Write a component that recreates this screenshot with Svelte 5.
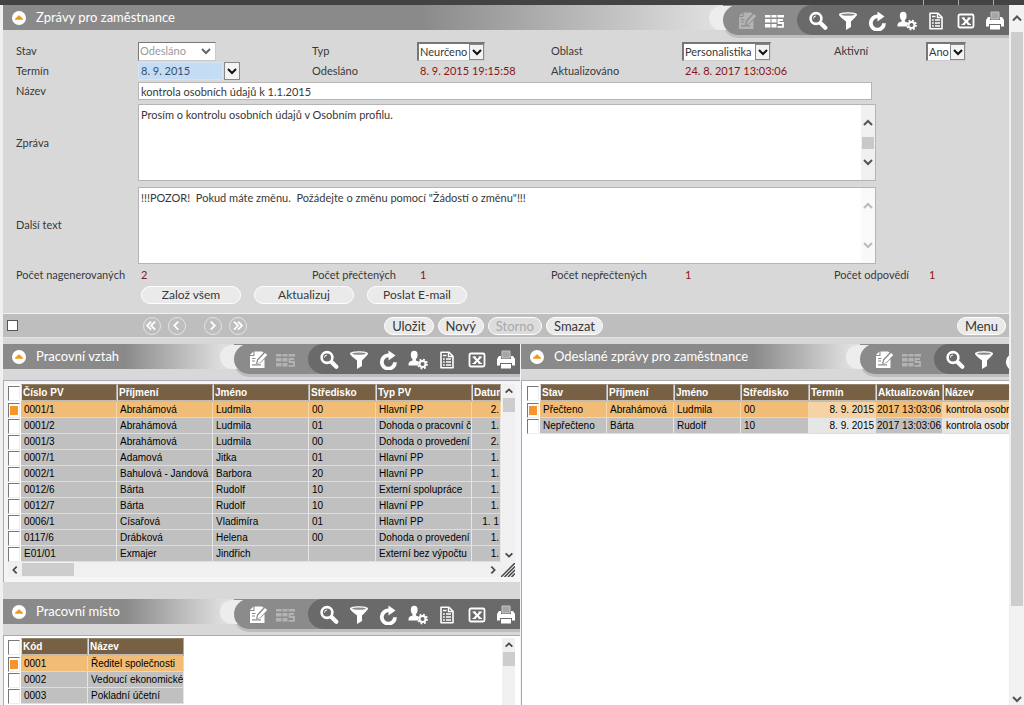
<script>
  const form = {
    top: [
      { label: 'Stav', options: ['Odesláno'], width: 78, disabled: true },
      { label: 'Typ', options: ['Neurčeno'], width: 68 },
      { label: 'Oblast', options: ['Personalistika'], width: 89 },
      { label: 'Aktivní', options: ['Ano'], width: 40 }
    ],
    counts: [
      { label: 'Počet nagenerovaných', value: 2 },
      { label: 'Počet přečtených', value: 1 },
      { label: 'Počet nepřečtených', value: 1 },
      { label: 'Počet odpovědí', value: 1 }
    ]
  };

  const relations = {
    columns: [
      { name: 'Číslo PV', width: 96 },
      { name: 'Příjmení', width: 96 },
      { name: 'Jméno', width: 96 },
      { name: 'Středisko', width: 67 },
      { name: 'Typ PV', width: 96 },
      { name: 'Datum', width: 29, right: true }
    ],
    rows: [
      ['0001/1', 'Abrahámová', 'Ludmila', '00', 'Hlavní PP', '2.'],
      ['0001/2', 'Abrahámová', 'Ludmila', '01', 'Dohoda o pracovní č', '1.'],
      ['0001/3', 'Abrahámová', 'Ludmila', '00', 'Dohoda o provedení', '2.'],
      ['0007/1', 'Adamová', 'Jitka', '01', 'Hlavní PP', '1.'],
      ['0002/1', 'Bahulová - Jandová', 'Barbora', '20', 'Hlavní PP', '1.'],
      ['0012/6', 'Bárta', 'Rudolf', '10', 'Externí spolupráce', '1.'],
      ['0012/7', 'Bárta', 'Rudolf', '10', 'Hlavní PP', '1.'],
      ['0006/1', 'Císařová', 'Vladimíra', '01', 'Hlavní PP', '1. 1'],
      ['0117/6', 'Drábková', 'Helena', '00', 'Dohoda o provedení', '1.'],
      ['E01/01', 'Exmajer', 'Jindřich', '', 'Externí bez výpočtu', '1.']
    ]
  };

  const places = {
    columns: [
      { name: 'Kód', width: 67 },
      { name: 'Název', width: 96 }
    ],
    rows: [
      ['0001', 'Ředitel společnosti'],
      ['0002', 'Vedoucí ekonomické'],
      ['0003', 'Pokladní účetní']
    ]
  };

  const sent = {
    columns: [
      { name: 'Stav', width: 67 },
      { name: 'Příjmení', width: 67 },
      { name: 'Jméno', width: 67 },
      { name: 'Středisko', width: 68 },
      { name: 'Termín', width: 67, right: true, light: true },
      { name: 'Aktualizován', width: 67, right: true },
      { name: 'Název', width: 96, light: true }
    ],
    rows: [
      ['Přečteno', 'Abrahámová', 'Ludmila', '00', '8. 9. 2015', '2017 13:03:06', 'kontrola osobn'],
      ['Nepřečteno', 'Bárta', 'Rudolf', '10', '8. 9. 2015', '2017 13:03:06', 'kontrola osobn']
    ]
  };

  const tools = [
    ['search', 'Hledat'],
    ['filter', 'Filtr'],
    ['refresh', 'Obnovit'],
    ['user', 'Nastavení uživatele'],
    ['doc', 'Sestava'],
    ['excel', 'Export'],
    ['print', 'Tisk']
  ];
</script>

{#snippet icon(name)}
  <svg class="icon" viewBox="0 0 20 20" aria-hidden="true">
    {#if name === 'edit'}
      <path fill="currentColor" d="M6.500 1.500H14l1.500 1L9 9.500l-1 4.500 4.500-1L16.500 9v9H2V6h4.500z" />
      <path fill="currentColor" d="M2 5 5.400 1.500V5zM17 3l2.200 1.900-7 7.500-2.700.9.500-2.900z" />
      <path class="cut" d="M4 8.500h3.500M4 11h3M4 14.800h9" stroke-width="1.200" fill="none" />
    {:else if name === 'table'}
      <path fill="currentColor" d="M1 4h5.500v2.500H1zM7.500 4h5v2.500h-5zM13.500 4H20v2.500h-6.500zM1 8h5.500v3.500H1zM7.500 8h5v3.500h-5zM1 13h5.500v3.500H1zM7.500 13h5v3.500h-5z" />
      <path d="M19 9h-4.500v3h4.500v3.800h-5.500" fill="none" stroke="currentColor" stroke-width="1.800" />
    {:else if name === 'search'}
      <circle cx="8" cy="7.500" r="5.400" fill="none" stroke="currentColor" stroke-width="2.600" />
      <path d="m13 12.500 4.300 4.300" stroke="currentColor" stroke-width="4.200" stroke-linecap="round" />
      <path d="M5.500 7.500a2.500 2.500 0 0 1 2.500-2.500" fill="none" stroke="currentColor" />
    {:else if name === 'filter'}
      <path fill="currentColor" d="M1 3.600C1 .5 19 .5 19 3.600c0 1-1 1.800-2 2.800l-4 4.200V16l-5 3v-8.400L3 6.400c-1-1-2-1.800-2-2.800z" />
      <ellipse class="hole" cx="10" cy="3.600" rx="6.800" ry="1.100" />
    {:else if name === 'refresh'}
      <path d="M17 12.200A6.600 6.600 0 1 1 11 5.500" fill="none" stroke="currentColor" stroke-width="3.800" />
      <path fill="currentColor" d="M10.500.5 17.500 5.500l-7 5z" />
    {:else if name === 'user'}
      <ellipse cx="6.200" cy="5" rx="3.400" ry="4.200" fill="currentColor" />
      <path fill="currentColor" d="M4.500 8h3.400v2.500l3 1.300-1 3.700H.5c0-3 .5-3.800 4-5z" />
      <circle cx="14.500" cy="14" r="3" fill="none" stroke="currentColor" stroke-width="2" />
      <circle cx="14.500" cy="14" r="4.500" fill="none" stroke="currentColor" stroke-width="1.800" stroke-dasharray="1.800 1.734" />
    {:else if name === 'doc'}
      <path d="M4 2.200h8l4 4v11.600H4z" fill="none" stroke="currentColor" stroke-width="1.600" stroke-linejoin="round" />
      <path d="M11.500 2v4.500H16M6 5.500h3.500M6 9h1.800M9 9h5M6 12h1.800M9 12h5M6 15h1.800M9 15h5" fill="none" stroke="currentColor" stroke-width="1.400" />
    {:else if name === 'excel'}
      <rect x="2.500" y="3.500" width="15" height="13" rx="1.500" fill="none" stroke="currentColor" stroke-width="1.800" />
      <path d="M5.500 7h3.500M11.500 7H15M5.500 13.500h3.500M11.500 13.500H15" stroke="currentColor" stroke-width="1.200" />
      <path d="m6.800 7 6.500 6.500M13.700 7l-6.500 6.500" stroke="currentColor" stroke-width="2" />
    {:else if name === 'print'}
      <path d="M6 1h8v7H6z" fill="#a5a5a5" stroke="#c4c4c4" />
      <path fill="currentColor" d="M3 6h2v3h10V6h2l2 3v6.500h-3V13H4v2.500H1V9z" />
      <path fill="currentColor" d="M5 14h10v4.500H5z" />
      <path class="cut" d="M4 13.500h12" stroke-width="1" />
    {/if}
  </svg>
{/snippet}

{#snippet chevron(dir)}
  <svg class="chevron {dir}" viewBox="0 0 12 12" aria-hidden="true">
    <path d="m2 4 4 4 4-4" fill="none" stroke="currentColor" stroke-width="2" />
  </svg>
{/snippet}

{#snippet header(title)}
  <header class="head">
    <button class="collapse" aria-label="Sbalit"><svg viewBox="0 0 14 14" aria-hidden="true"><path d="m7 4.200 4 3.600v1H3v-1z" fill="#f0981c" /></svg></button>
    <h2>{title}</h2>
    <div class="fade"></div>
    <div class="tools">
      <button aria-label="Upravit" class="tool edit">{@render icon('edit')}</button>
      <button aria-label="Tabulka" class="tool grid">{@render icon('table')}</button>
      <div class="dark">
        {#each tools as [name, label]}
          <button class="tool" aria-label={label}>{@render icon(name)}</button>
        {/each}
      </div>
    </div>
  </header>
{/snippet}

{#snippet grid(data)}
  <table style:width="{data.columns.reduce((s, c) => s + c.width, 13)}px">
    <colgroup>
      <col style:width="13px" />
      {#each data.columns as c}<col style:width="{c.width}px" />{/each}
    </colgroup>
    <thead>
      <tr>
        <th class="pick"><input type="checkbox" aria-label="Vybrat vše" /></th>
        {#each data.columns as c}<th>{c.name}</th>{/each}
      </tr>
    </thead>
    <tbody>
      {#each data.rows as row, i}
        <tr class:selected={i === 0}>
          <td class="pick"><input type="checkbox" checked={i === 0} aria-label="Vybrat {row[0]}" /></td>
          {#each row as cell, j}
            <td class:right={data.columns[j].right} class:light={data.columns[j].light}><div>{cell}</div></td>
          {/each}
        </tr>
      {/each}
    </tbody>
  </table>
{/snippet}

<div class="page">
  <div class="strip"><i></i><i></i><i></i></div>
  <div class="body">
    <main>
      <section class="detail">
        {@render header('Zprávy pro zaměstnance')}
        <form>
          <div class="fields">
            {#each form.top as f, i}
              <label for="top{i}">{f.label}</label>
              <span class="select" class:off={f.disabled} style:width="{f.width}px">
                <select id="top{i}" disabled={f.disabled}>
                  {#each f.options as o}<option>{o}</option>{/each}
                </select>
                <span class="drop">{@render chevron('down')}</span>
              </span>
            {/each}
            <label for="term">Termín</label>
            <span class="date">
              <input id="term" value="8. 9. 2015" />
              <button type="button" class="drop" aria-label="Kalendář">{@render chevron('down')}</button>
            </span>
            <span>Odesláno</span><output>8. 9. 2015 19:15:58</output>
            <span>Aktualizováno</span><output class="span">24. 8. 2017 13:03:06</output>
            <label for="name">Název</label>
            <div class="wide"><input id="name" class="name" value="kontrola osobních údajů k 1.1.2015" /></div>
            <label for="msg" class="tall">Zpráva</label>
            <div class="wide area">
              <textarea id="msg">Prosím o kontrolu osobních údajů v Osobním profilu.</textarea>
              <div class="scroll">{@render chevron('up')}<b></b>{@render chevron('down')}</div>
            </div>
            <label for="more" class="tall">Další text</label>
            <div class="wide area">
              <textarea id="more">!!!POZOR!  Pokud máte změnu.  Požádejte o změnu pomocí "Žádostí o změnu"!!!</textarea>
              <div class="scroll idle">{@render chevron('up')}{@render chevron('down')}</div>
            </div>
            {#each form.counts as c}
              <span>{c.label}</span><output>{c.value}</output>
            {/each}
            <div class="actions">
              <button type="button">Založ všem</button>
              <button type="button">Aktualizuj</button>
              <button type="button">Poslat E-mail</button>
            </div>
          </div>
        </form>
        <div class="bar">
          <div class="mark"><input type="checkbox" aria-label="Označit záznam" /></div>
          <nav aria-label="Záznamy">
            <button aria-label="První"><svg viewBox="0 0 18 18"><path d="m8 4-4.500 4.500L8 13M12.500 4 8 8.500l4.500 4.500" /></svg></button>
            <button aria-label="Předchozí"><svg viewBox="0 0 18 18"><path d="M10.500 4 6 8.500l4.500 4.500" /></svg></button>
            <button aria-label="Další" class="next"><svg viewBox="0 0 18 18"><path d="m6.500 4 4.500 4.500L6.500 13" /></svg></button>
            <button aria-label="Poslední"><svg viewBox="0 0 18 18"><path d="M4.500 4 9 8.500 4.500 13M9 4l4.500 4.500L9 13" /></svg></button>
          </nav>
          <div class="commands">
            <button>Uložit</button>
            <button>Nový</button>
            <button disabled>Storno</button>
            <button>Smazat</button>
          </div>
          <button class="menu">Menu</button>
        </div>
      </section>

      <div class="lower">
        <div class="left">
          <section class="panel">
            {@render header('Pracovní vztah')}
            <div class="box">
              <div class="view">
                <div class="clip">{@render grid(relations)}</div>
                <div class="vbar">{@render chevron('up')}<b></b><span></span>{@render chevron('down')}</div>
              </div>
              <div class="hbar">
                {@render chevron('west')}<b></b><span></span>{@render chevron('east')}
                <svg class="grip" viewBox="0 0 14 14" aria-hidden="true"><path d="M0 14 14 0M3.500 14 14 3.500M7 14l7-7M10.500 14l3.500-3.500" stroke="#444" stroke-width="1.500" /></svg>
              </div>
            </div>
          </section>
          <section class="panel last">
            {@render header('Pracovní místo')}
            <div class="box blank">
              <div class="view">
                <div class="clip">{@render grid(places)}</div>
                <div class="vbar">{@render chevron('up')}<b></b><span></span></div>
              </div>
            </div>
          </section>
        </div>
        <section class="panel sent">
          {@render header('Odeslané zprávy pro zaměstnance')}
          <div class="box blank">
            <div class="clip">{@render grid(sent)}</div>
          </div>
        </section>
      </div>
    </main>
    <div class="pagebar">{@render chevron('up')}<b></b><span></span>{@render chevron('down')}</div>
  </div>
</div>

<style>
  :global(body) { margin: 0; background: #f0f0f0; }
  .page, .page * { box-sizing: border-box; }
  .page {
    display: flex; flex-direction: column; height: 100vh; overflow: hidden;
    font: 11px/16px Lato, "Open Sans", sans-serif; color: #383838;
  }
  button, input, select, textarea { font: inherit; color: inherit; margin: 0; padding: 0; border: 0; background: none; border-radius: 0; appearance: none; }
  .strip { flex: none; height: 5px; background: #434343; display: flex; justify-content: flex-end; gap: 34px; padding-right: 30px; }
  .strip i { width: 1px; background: #aaa; }
  .body { flex: 1; min-height: 0; display: flex; }
  main { flex: 1; min-width: 0; margin-left: 3px; background: #d8d8d8; display: flex; flex-direction: column; }

  .head { flex: none; display: flex; height: 25px; align-items: flex-start; background: #8a8a8a; }
  .collapse { flex: none; width: 14px; height: 14px; margin: 6px 0 0 9px; border-radius: 50%; background: #fff; }
  .collapse svg { display: block; }
  h2 { margin: 0 0 0 10px; font-size: 13px; line-height: 25px; font-weight: 400; color: #fff; white-space: nowrap; }
  .fade { flex: 1; min-width: 0; height: 25px; background: linear-gradient(90deg, #8a8a8a 5%, #dedede 90%); }
  .tools {
    flex: none; display: flex; align-items: center; width: 286px; height: 30px;
    border-radius: 15px 0 0 15px; background: #8b8b8b; padding-left: 14px;
    box-shadow: -17px -2px 0 -3px #ededed, 0 3px 0 #bdbdbd;
  }
  .detail .fade { background: linear-gradient(90deg, #8a8a8a 45%, #e2e2e2); }
  .tool { width: 20px; height: 20px; margin-top: 2px; color: #fff; }
  .icon { display: block; width: 20px; height: 20px; }
  .grid { margin-left: 7px; color: #b3b3b3; }
  .detail .edit { color: #b3b3b3; }
  .detail .grid { color: #fff; }
  .cut { stroke: #8b8b8b; }
  .hole { fill: #8b8b8b; }
  .dark {
    margin-left: auto; width: 212px; height: 30px; display: flex; align-items: center; justify-content: space-between;
    padding: 0 4px 0 11px; border-radius: 15px 0 0 15px; background: #6a6a6a;
  }
  .dark .cut { stroke: #6a6a6a; }

  .fields {
    display: grid; padding: 11px 0 9px 13px; align-items: center;
    grid-template-columns: 122fr 174fr 105fr 134fr 131fr 152fr 92fr 83fr;
    grid-template-rows: 20px 20px 20px 80px 83px 22px 18px;
  }
  .fields > * { min-width: 0; white-space: nowrap; }
  .tall { padding-top: 4px; }
  output { color: #8b1414; padding-left: 3px; }
  .span { grid-column: span 3; }
  .select { display: flex; height: 19px; background: #fff; border: 1px solid #ccc; border-top: 2px solid #777; border-left: 2px solid #777; }
  .select select { flex: 1; min-width: 0; padding-left: 1px; opacity: 1; text-overflow: clip; }
  .select.off { border-top-width: 1px; border-left-width: 1px; color: #999; }
  .select.off .drop { border-color: transparent; background: none; color: #666; width: 18px; }
  .drop { flex: none; display: flex; align-items: center; justify-content: center; width: 15px; background: #f3f3f3; border: 1px solid #888; color: #111; }
  .chevron { display: block; width: 12px; height: 12px; flex: none; }
  .up { transform: rotate(180deg); }
  .west { transform: rotate(90deg); }
  .east { transform: rotate(-90deg); }
  .date { display: flex; height: 18px; }
  .date input { width: 85px; background: #c5dcf5; border: 1px solid #d5e3f2; padding-left: 2px; color: #34506f; }
  .date .drop { width: 16px; margin-left: 1px; }
  .wide { grid-column: 2 / -1; }
  .name { display: block; width: 84.3%; height: 18px; padding-left: 2px; background: #fff; border: 1px solid #b5b5b5; }
  .area { display: flex; width: 84.7%; height: 77px; align-self: end; background: #fff; border: 1px solid #b5b5b5; }
  textarea { flex: 1; min-width: 0; resize: none; padding: 2px; overflow: hidden; outline: 0; }
  .scroll { width: 14px; background: #f0f0f0; display: flex; flex-direction: column; justify-content: space-between; align-items: center; padding: 12px 0; color: #555; }
  .scroll b { width: 12px; height: 12px; background: #c9c9c9; }
  .idle { background: #f9f9f9; color: #bbb; }
  .actions { grid-column: 2 / -1; display: flex; gap: 13px; padding-left: 3px; }
  .actions button, .commands button, .menu {
    height: 18px; border: 1px solid #fff; border-radius: 9px; background: #eaeaea; line-height: 16px; font-size: 13px; white-space: nowrap;
  }
  .actions button { width: 100px; font-size: 12px; }

  .bar { display: flex; align-items: center; height: 25px; background: #bebebe; border-top: 1px solid #f0f0f0; border-bottom: 1px solid #e2e2e2; padding-right: 3px; }
  .mark { width: 14%; padding-left: 4px; }
  .mark input { display: block; width: 11px; height: 11px; background: #fff; border: 1px solid #555; }
  nav { display: flex; gap: 7px; width: 24%; }
  nav button { width: 18px; height: 18px; border: 1px solid #e4e4e4; border-radius: 50%; }
  nav .next { margin-left: 11px; }
  nav svg { display: block; fill: none; stroke: #fff; stroke-width: 2; }
  .commands { display: flex; gap: 4px; }
  .commands button { padding: 0 7px; }
  .commands button:disabled { color: #a8a8a8; background: #dcdcdc; }
  .menu { width: 49px; margin-left: auto; }

  .lower { flex: 1; min-height: 0; display: grid; grid-template-columns: 517fr 488fr; grid-template-rows: 100%; gap: 1px; margin-top: 6px; background: #f4f5f9; }
  .left { min-width: 0; display: flex; flex-direction: column; gap: 17px; background: #d8d8d8; min-height: 0; overflow: hidden; }
  .panel { flex: none; min-width: 0; display: flex; flex-direction: column; background: #d8d8d8; }
  .panel.last { flex: 1; min-height: 0; }
  .sent { overflow: hidden; }
  .sent .head { width: 128%; }
  .box { margin-top: 11px; border-top: 1px solid #a9abb0; border-left: 1px solid #a9abb0; background: #f4f5f9; padding: 3px 5px 5px 4px; }
  .blank { flex: 1; min-height: 0; background: #fff; overflow: hidden; padding-bottom: 0; }
  .last .box { padding-top: 2px; }
  .sent .box { padding-left: 5px; padding-right: 0; }
  .view { display: flex; }
  .blank .view { height: 100%; }
  .clip { flex: 1; min-width: 0; overflow: hidden; }
  .vbar { flex: none; width: 13px; display: flex; flex-direction: column; align-items: center; background: #f0f0f0; color: #444; }
  .vbar .chevron { width: 10px; height: 14px; }
  .vbar b { flex: none; width: 12px; height: 14px; background: #cdcdcd; }
  .vbar span, .hbar span, .pagebar span { flex: 1; }
  .hbar { display: flex; align-items: center; height: 15px; background: #f0f0f0; color: #444; }
  .hbar .chevron { width: 10px; height: 10px; margin: 0 2px; }
  .hbar b { width: 52px; height: 13px; background: #cdcdcd; }
  .grip { width: 14px; height: 14px; margin-left: 1px; }

  table { table-layout: fixed; border-collapse: separate; border-spacing: 0; font: 10px/15px "Liberation Sans", Arial, sans-serif; color: #000; }
  th { height: 18px; padding: 0 0 0 1px; text-align: left; font-weight: 700; color: #fff; background: #776044; border-top: 1px solid #94836c; border-left: 1px solid #ddd; border-right: 1px solid #aaa; border-bottom: 2px solid #c4bcb0; overflow: hidden; white-space: nowrap; }
  td { height: 16px; padding: 0 0 0 3px; background: #c0c0c0; border-right: 1px solid #e6e6e6; border-bottom: 1px solid #dedede; white-space: nowrap; overflow: hidden; }
  td div { overflow: hidden; height: 15px; }
  td.right { padding: 0 1px; text-align: right; }
  td.light { background: #e6e6e6; }
  .selected td { background: #f0bc76; border-right-color: #f6d6a8; border-bottom-color: #f6d6a8; }
  .selected td.light { background: #f5d3a5; }
  th.pick, td.pick, .selected td.pick { padding: 0; background: #fff; border: 0; }
  .pick input { display: block; width: 12px; height: 15px; background: #fff; border: 1px solid #eee; border-top-color: #777; border-left-color: #777; }
  .pick input:checked { background: linear-gradient(#f7942c, #f7942c) center / 8px 9px no-repeat #fff; }

  .pagebar { flex: none; width: 15px; display: flex; flex-direction: column; align-items: center; background: #f2f2f2; color: #555; border-left: 1px solid #eee; }
  .pagebar .chevron { height: 27px; }
  .pagebar .chevron.down { height: 12px; }
  .pagebar b { width: 12px; flex: 0 0 82%; background: #cdcdcd; }
</style>
